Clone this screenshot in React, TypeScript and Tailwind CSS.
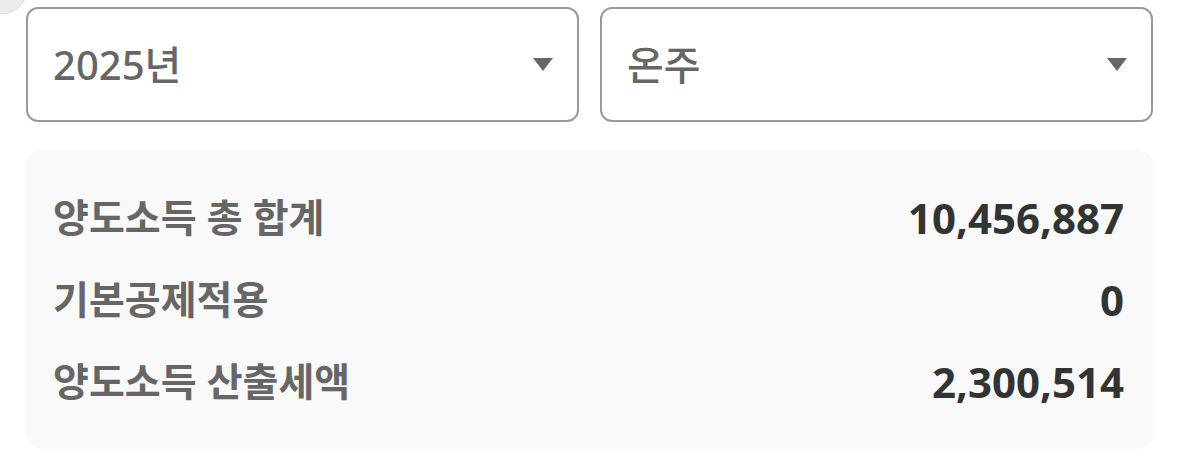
const rows = [
  { label: '양도소득 총 합계', value: '10,456,887' },
  { label: '기본공제적용', value: '0' },
  { label: '양도소득 산출세액', value: '2,300,514' },
];

function Select({ value }: { value: string }) {
  return (
    <div className="flex-1 h-[115px] flex items-center justify-between border-2 border-[#9a9a9a] rounded-[12px] bg-white pl-[25px] pr-[24px]">
      <span className="text-[40px] font-medium text-[#666666]">{value}</span>
      <svg width="20" height="13" viewBox="0 0 20 13">
        <path d="M0 0 H20 L10 13 Z" fill="#666666" />
      </svg>
    </div>
  );
}

export default function App() {
  return (
    <div
      className="relative w-[1179px] h-[471px] bg-white px-[26px] pt-[7px] overflow-hidden"
      style={{ fontFamily: '"Noto Sans", "Noto Sans CJK KR", sans-serif' }}
    >
      {/* partly hidden floating bubble at top-left */}
      <div className="absolute -left-[60px] -top-[60px] w-[87px] h-[74px] rounded-[18px] rounded-br-[24px] bg-[#ececec] border border-[#dcdcdc]" />

      <div className="flex gap-[21px]">
        <Select value="2025년" />
        <Select value="온주" />
      </div>

      <div className="mt-[27px] bg-[#f9f9f9] rounded-[16px] pl-[27px] pr-[29px] py-[27px]">
        {rows.map((row) => (
          <div key={row.label} className="h-[82px] flex items-center justify-between">
            <span className="text-[39px] font-bold text-[#666666]">{row.label}</span>
            <span className="text-[42px] font-bold text-[#333333]">{row.value}</span>
          </div>
        ))}
      </div>
    </div>
  );
}
